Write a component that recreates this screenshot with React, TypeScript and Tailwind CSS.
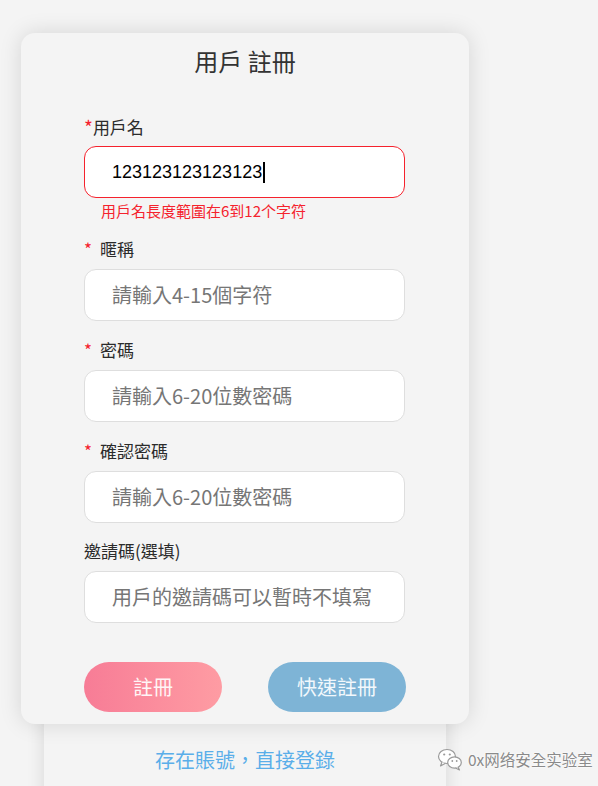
import React from "react";

const font = { fontFamily: '"Noto Sans CJK TC", "Noto Sans CJK SC", sans-serif' };

function Label({ text, required, tight }: { text: string; required?: boolean; tight?: boolean }) {
  return (
    <div className="flex h-[24px] items-center text-[17px] leading-[24px] text-[#2b2b2b]">
      {required && (
        <span className={`text-[#f5222d] ${tight ? "text-[19px]" : "text-[17px] mr-[8px]"}`}>*</span>
      )}
      <span>{text}</span>
    </div>
  );
}

function Field({ placeholder }: { placeholder: string }) {
  return (
    <div className="mt-[8px] flex h-[52px] w-[321px] items-center rounded-[12px] border border-[#dedede] bg-white pl-[27px]">
      <span className="text-[20px] leading-none text-[#767676]">{placeholder}</span>
    </div>
  );
}

function WeChat() {
  return (
    <svg width="26" height="24" viewBox="0 0 26 24">
      <ellipse cx="10" cy="9.5" rx="8.5" ry="7" fill="#fff" stroke="#9a9a9a" strokeWidth="1.2" />
      <path d="M5 15 L3.5 19 L8.5 16.2" fill="#fff" stroke="#9a9a9a" strokeWidth="1.2" strokeLinejoin="round" />
      <circle cx="7.2" cy="7.5" r="1.1" fill="#9a9a9a" />
      <circle cx="12.8" cy="7.5" r="1.1" fill="#9a9a9a" />
      <ellipse cx="17.5" cy="15.5" rx="6.8" ry="5.6" fill="#fff" stroke="#9a9a9a" strokeWidth="1.2" />
      <path d="M21 20 L22.5 23 L18.5 21" fill="#fff" stroke="#9a9a9a" strokeWidth="1.2" strokeLinejoin="round" />
      <circle cx="15.3" cy="14" r="0.9" fill="#9a9a9a" />
      <circle cx="19.7" cy="14" r="0.9" fill="#9a9a9a" />
    </svg>
  );
}

export default function App() {
  return (
    <div className="relative h-[786px] w-[598px] overflow-hidden bg-[#f4f4f4]" style={font}>
      <div className="pl-[21px] pt-[33px]">
        <div className="w-[448px]">
          <div className="relative z-10 flex flex-col rounded-[14px] bg-[#f4f4f4] pb-[12px] pl-[63px] pt-[12px] shadow-[0_0_22px_rgba(0,0,0,0.13)]">
            <div className="-ml-[63px] h-[32px] text-center text-[24px] leading-[32px] text-[#333]">用戶 註冊</div>

            <div className="mt-[38px]">
              <Label text="用戶名" required tight />
              <div className="mt-[7px] flex h-[52px] w-[321px] items-center rounded-[12px] border border-[#f5222d] bg-white pl-[27px]">
                <span className="text-[18px] leading-none text-black" style={{ fontFamily: '"Liberation Sans", Arial, sans-serif' }}>
                  123123123123123
                </span>
                <span className="ml-[1px] inline-block h-[21px] w-[2px] bg-black" />
              </div>
              <div className="mt-[3px] h-[20px] pl-[17px] text-[15px] leading-[20px] text-[#f5222d]">用戶名長度範圍在6到12个字符</div>
            </div>

            <div className="mt-[16px]">
              <Label text="暱稱" required />
              <Field placeholder="請輸入4-15個字符" />
            </div>

            <div className="mt-[17px]">
              <Label text="密碼" required />
              <Field placeholder="請輸入6-20位數密碼" />
            </div>

            <div className="mt-[17px]">
              <Label text="確認密碼" required />
              <Field placeholder="請輸入6-20位數密碼" />
            </div>

            <div className="mt-[16px]">
              <Label text="邀請碼(選填)" />
              <Field placeholder="用戶的邀請碼可以暫時不填寫" />
            </div>

            <div className="mt-[39px] flex w-[322px] justify-between">
              <div className="flex h-[50px] w-[138px] items-center justify-center rounded-full bg-gradient-to-r from-[#f77c96] to-[#fe9ca3] text-[20px] text-[#fff5f6]">
                註冊
              </div>
              <div className="flex h-[50px] w-[138px] items-center justify-center rounded-full bg-[#7eb4d6] text-[20px] text-[#f2f8fc]">
                快速註冊
              </div>
            </div>
          </div>

          <div className="relative z-0 mx-[23px] -mt-[24px] h-[120px] rounded-[14px] bg-[#f4f4f4] pt-[46px] shadow-[0_0_18px_rgba(0,0,0,0.12)]">
            <div className="h-[28px] text-center text-[20px] leading-[28px] text-[#5aaee9]">存在賬號，直接登錄</div>
          </div>
        </div>
      </div>

      <div className="absolute left-[437px] top-[747px] z-20 flex items-center gap-[5px]">
        <WeChat />
        <span
          className="text-[15.5px] leading-[24px] text-[#8a8a8a]"
          style={{ textShadow: "0 0 2px #fff, 0 0 2px #fff" }}
        >
          0x网络安全实验室
        </span>
      </div>
    </div>
  );
}
